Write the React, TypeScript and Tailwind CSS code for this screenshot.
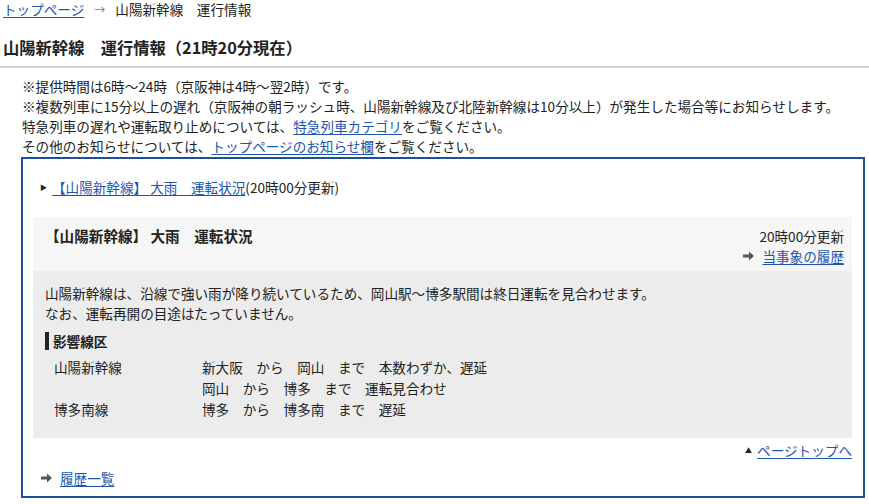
import React from "react";

const linkCls = "text-[#1d57ad] underline underline-offset-2";

function GrayArrow() {
  return (
    <svg width="11" height="10" viewBox="0 0 11 10" className="inline-block">
      <path d="M0 3.5h6V0.5L11 5 6 9.5V6.5H0z" fill="#555" />
    </svg>
  );
}

const rows = [
  { line: "山陽新幹線", text: "新大阪　から　岡山　まで　本数わずか、遅延" },
  { line: "", text: "岡山　から　博多　まで　運転見合わせ" },
  { line: "博多南線", text: "博多　から　博多南　まで　遅延" },
];

export default function App() {
  return (
    <div
      className="w-[869px] h-[504px] bg-white text-[#222] text-[13.6px] overflow-hidden"
      style={{ fontFamily: '"Noto Sans CJK JP", "Noto Sans", sans-serif' }}
    >
      {/* Breadcrumb */}
      <div className="pl-[3px] leading-[18px] flex items-center">
        <a className={linkCls}>トップページ</a>
        <span className="mx-[10px] text-[#777] text-[11px]">→</span>
        <span>山陽新幹線　運行情報</span>
      </div>

      {/* Title */}
      <h1 className="mt-[17px] pl-[3px] pb-[7px] text-[16.3px] font-bold leading-[24px] border-b-2 border-[#cfcfcf]">
        山陽新幹線　運行情報（21時20分現在）
      </h1>

      {/* Notes */}
      <div className="mt-[8px] pl-[22px] leading-[20px]">
        <p>※提供時間は6時～24時（京阪神は4時～翌2時）です。</p>
        <p>
          ※複数列車に15分以上の遅れ（京阪神の朝ラッシュ時、山陽新幹線及び北陸新幹線は10分以上）が発生した場合等にお知らせします。
        </p>
        <p>
          特急列車の遅れや運転取り止めについては、
          <a className={linkCls}>特急列車カテゴリ</a>をご覧ください。
        </p>
        <p>
          その他のお知らせについては、
          <a className={linkCls}>トップページのお知らせ欄</a>をご覧ください。
        </p>
      </div>

      {/* Info box */}
      <div className="mt-px ml-[21px] mr-[4px] border-2 border-[#1e4f9e] pt-[18px] pb-[8px] leading-[20px]">
        <div className="pl-[17px] flex items-center">
          <span className="text-[7px] mr-[5px]">▶</span>
          <a className={linkCls}>【山陽新幹線】 大雨　運転状況</a>
          <span>(20時00分更新)</span>
        </div>

        <div className="mt-[20px] ml-[10px] mr-[11px]">
          <div className="bg-[#f6f6f6] pl-[12px] pr-[8px] pt-[9px] pb-[5px] flex justify-between">
            <h2 className="font-bold text-[14.6px] leading-[20px]">
              【山陽新幹線】 大雨　運転状況
            </h2>
            <div className="flex flex-col items-end">
              <span>20時00分更新</span>
              <span className="flex items-center gap-[8px]">
                <GrayArrow />
                <a className={linkCls}>当事象の履歴</a>
              </span>
            </div>
          </div>

          <div className="bg-[#ececec] pl-[12px] pt-[12px] pb-[18px]">
            <p>
              山陽新幹線は、沿線で強い雨が降り続いているため、岡山駅～博多駅間は終日運転を見合わせます。
            </p>
            <p>なお、運転再開の目途はたっていません。</p>
            <h3 className="mt-[8px] flex items-center font-bold">
              <span className="w-[4px] h-[18px] bg-[#222] mr-[4px]" />
              影響線区
            </h3>
            <div className="mt-[6px] leading-[21px]">
              {rows.map((r, i) => (
                <div key={i} className="flex">
                  <span className="w-[157px] pl-[9px]">{r.line}</span>
                  <span>{r.text}</span>
                </div>
              ))}
            </div>
          </div>
        </div>

        <div className="mt-[2px] mr-[11px] flex justify-end items-center">
          <span className="text-[7px] mr-[5px]">▲</span>
          <a className={linkCls}>ページトップへ</a>
        </div>

        <div className="mt-[8px] pl-[18px] flex items-center gap-[8px]">
          <GrayArrow />
          <a className={linkCls}>履歴一覧</a>
        </div>
      </div>
    </div>
  );
}
